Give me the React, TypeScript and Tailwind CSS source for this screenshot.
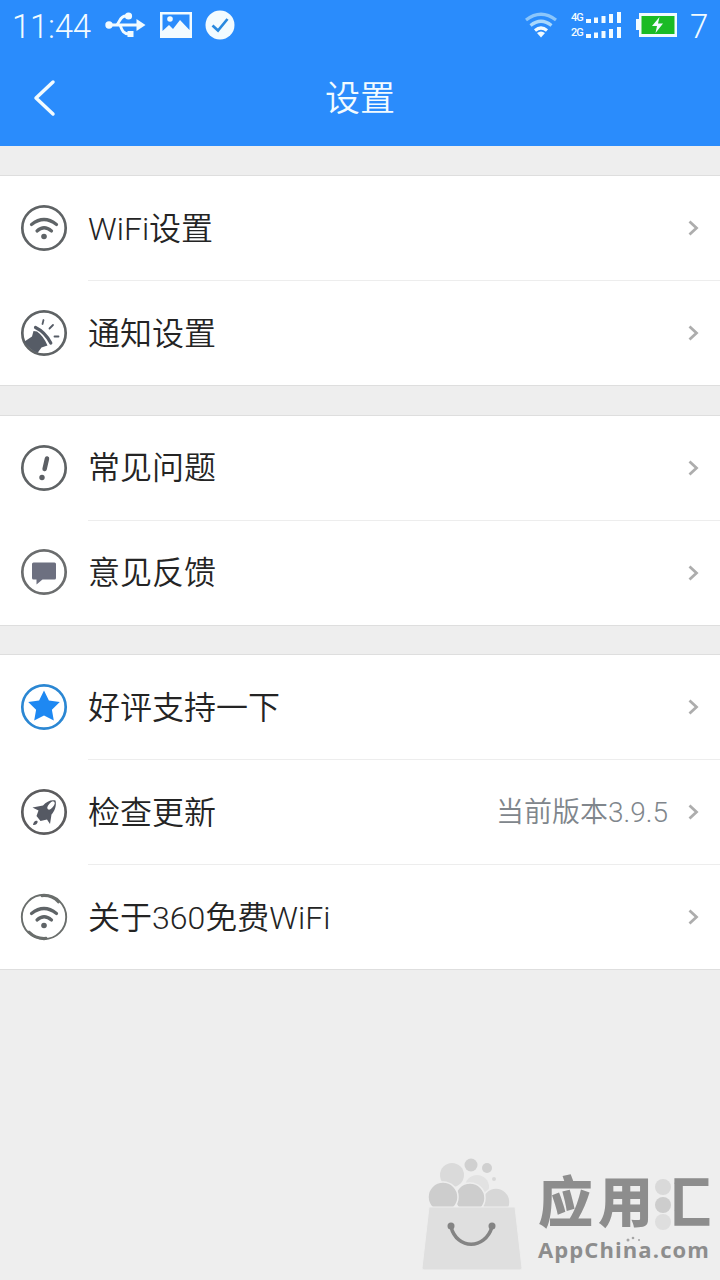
import { type ReactNode } from "react";

type Item = {
  label: string;
  icon: ReactNode;
  note?: string;
};

function Ring({ color = "#5f6365", children }: { color?: string; children: ReactNode }) {
  return (
    <svg width="48" height="48" viewBox="0 0 48 48" fill="none" className="shrink-0">
      <circle cx="24" cy="24" r="21.7" stroke={color} strokeWidth="2.7" />
      {children}
    </svg>
  );
}

function WifiArcs() {
  return (
    <>
      <path d="M11.500 20.500Q24 10.500 36.500 20.500" stroke="#5f6467" strokeWidth="3.200" strokeLinecap="round" />
      <path d="M17 27Q24 20.500 31.500 27" stroke="#5f6467" strokeWidth="3.200" strokeLinecap="round" />
      <circle cx="24" cy="32.500" r="2.800" fill="#5f6467" />
    </>
  );
}

function WifiIcon() {
  return (
    <Ring>
      <WifiArcs />
    </Ring>
  );
}

function NoticeIcon() {
  return (
    <Ring>
      <path d="M13.500 22L17 22.500Q23.500 27 27.500 36.500L21.500 38.500L17.500 44Q8.500 40 4.500 32.500L12 27.500Z" fill="#565c66" />
      <path d="M15.500 18.500Q25 23 30.800 34" stroke="#565c66" strokeWidth="3.200" strokeLinecap="round" />
      <path d="M23.500 11L22.500 15M33 16L29.500 19.500M34.500 27.500H38.500" stroke="#565c66" strokeWidth="1.800" strokeLinecap="round" />
    </Ring>
  );
}

function QuestionIcon() {
  return (
    <Ring>
      <path d="M27 14.500L24.600 25" stroke="#5c5f64" strokeWidth="4.500" strokeLinecap="round" />
      <circle cx="22" cy="33.500" r="2.700" fill="#5c5f64" />
    </Ring>
  );
}

function FeedbackIcon() {
  return (
    <Ring color="#6b6d6e">
      <path d="M13.500 14.500H34.500Q36 14.500 36 16V30Q36 31.500 34.500 31.500H22.500L16.500 36.500V31.500H13.500Q12 31.500 12 30V16Q12 14.500 13.500 14.500Z" fill="#6d7080" />
    </Ring>
  );
}

function StarIcon() {
  return (
    <Ring color="#2b87d3">
      <path d="M24 7.500L28.900 17.400L39.800 19L31.900 26.700L33.800 37.500L24 32.400L14.200 37.500L16.100 26.700L8.200 19L19.100 17.400Z" fill="#1e88f2" />
    </Ring>
  );
}

function RocketIcon() {
  return (
    <Ring color="#5c5c5e">
      <path d="M35.500 12.500C37 18 34 24 31.500 26.500L30 36L27 31.500L20.500 33L16.500 28L18.500 22.500L12.500 19.500L23 17.500C26.500 13.500 31 11.500 35.500 12.500Z" fill="#555963" />
      <ellipse cx="31" cy="17.500" rx="2.400" ry="4.800" transform="rotate(40 31 17.500)" fill="#fff" />
      <path d="M13 37C13.500 34 15 32 17.500 33C18 35.500 16 37 13 37Z" fill="#555963" />
    </Ring>
  );
}

function AboutIcon() {
  return (
    <svg width="48" height="48" viewBox="0 0 48 48" fill="none" className="shrink-0">
      <circle cx="24" cy="24" r="22.200" stroke="#6a6e6c" strokeWidth="1.900" />
      <path d="M22 2.800Q32 2 38.500 9M26 45.200Q16 46 9 39" stroke="#6a6e6c" strokeWidth="2.700" strokeLinecap="round" />
      <WifiArcs />
    </svg>
  );
}

const groups: Item[][] = [
  [
    { label: "WiFi设置", icon: <WifiIcon /> },
    { label: "通知设置", icon: <NoticeIcon /> },
  ],
  [
    { label: "常见问题", icon: <QuestionIcon /> },
    { label: "意见反馈", icon: <FeedbackIcon /> },
  ],
  [
    { label: "好评支持一下", icon: <StarIcon /> },
    { label: "检查更新", icon: <RocketIcon />, note: "当前版本3.9.5" },
    { label: "关于360免费WiFi", icon: <AboutIcon /> },
  ],
];

function SignalRow({ label }: { label: string }) {
  return (
    <div className="flex h-[15px] items-center">
      <span className="w-[15px] text-[11px] leading-none font-medium tracking-[-1px]">{label}</span>
      <svg width="36" height="11" viewBox="0 0 36 11" fill="currentColor" className="shrink-0">
        <rect x="0" y="7" width="5" height="4" />
        <rect x="8" y="5.500" width="4" height="5.500" />
        <rect x="15.500" y="4" width="4" height="7" />
        <rect x="23" y="2" width="4" height="9" />
        <rect x="31" y="0" width="4" height="11" />
      </svg>
    </div>
  );
}

function StatusBar() {
  return (
    <div className="flex h-[50px] items-center pl-3 text-[#f2fbff]">
      <span className="mt-0.5 w-[81px] text-[33px] leading-none font-light tracking-[-0.3px] whitespace-nowrap">11:44</span>

      {/* USB */}
      <svg width="41" height="28" viewBox="0 0 41 28" fill="none" stroke="currentColor" strokeWidth="2.800" className="ml-3">
        <path d="M3 14H34M11 14C15 13 14 5 21 5H24M15 14C17 19 18 23 24 23" />
        <circle cx="4" cy="14" r="3.700" fill="currentColor" stroke="none" />
        <circle cx="23.500" cy="5" r="3.600" fill="currentColor" stroke="none" />
        <path d="M31.500 8L40.500 14L31.500 20ZM22.500 20H28.500V26H22.500Z" fill="currentColor" stroke="none" />
      </svg>

      {/* Picture */}
      <svg width="34" height="28" viewBox="0 0 34 28" className="ml-[13px]">
        <path fillRule="evenodd" d="M1 1H33V27H1ZM3.500 3.500V20L10 14L14 18L21 9L30.500 19V3.500Z" fill="currentColor" />
        <circle cx="11" cy="8" r="2.800" fill="currentColor" />
      </svg>

      {/* Done */}
      <svg width="30" height="30" viewBox="0 0 30 30" fill="none" className="ml-[12px]">
        <circle cx="15" cy="15" r="14.500" fill="currentColor" />
        <path d="M7.500 15.500L13 20.500L22.500 9" stroke="#2889df" strokeWidth="2.700" />
      </svg>

      <div className="ml-auto flex items-center">
        {/* Wifi strength */}
        <svg width="32" height="26" viewBox="0 0 32 26" fill="none" strokeWidth="3.200">
          <path d="M1 8Q16 -3.500 31 8" stroke="#8bc6fb" />
          <path d="M5.500 13.500Q16 5 26.500 13.500" stroke="#a9d8fc" />
          <path d="M10 18.500Q16 13.500 22 18.500" stroke="currentColor" />
          <path d="M12 21Q16 18 20 21L16 25.500Z" fill="currentColor" />
        </svg>
        <div className="ml-[14px] flex w-[51px] flex-col">
          <SignalRow label="4G" />
          <SignalRow label="2G" />
        </div>
        <svg width="43" height="26" viewBox="0 0 43 26" className="ml-[13px]">
          <path d="M1 7H4V1H42V25H4V18H1Z" fill="currentColor" />
          <rect x="6.500" y="4" width="33" height="18" fill="#1bbb25" />
          <path d="M24.500 5L17 14H22L20.500 21L28 11.500H23Z" fill="currentColor" />
        </svg>
        <span className="mt-0.5 ml-[12px] w-[30px] text-[33px] leading-none font-light">7</span>
      </div>
    </div>
  );
}

function SettingRow({ item, divided }: { item: Item; divided: boolean }) {
  return (
    <li className="flex h-[105px] pl-5 last:h-[104px]">
      <div className="flex items-center pb-px last:pb-0">{item.icon}</div>
      <div className={`ml-5 flex flex-1 items-center pr-[21px] ${divided ? "border-b border-[#ededed]" : ""}`}>
        <span className="pt-px text-[32px] leading-none font-[350] text-[#242424]">{item.label}</span>
        {item.note && (
          <span className="ml-auto pt-0.5 text-[28px] leading-none font-[350] text-[#80868c]">{item.note}</span>
        )}
        <svg width="12" height="18" viewBox="0 0 12 18" fill="none" className={item.note ? "ml-[19px]" : "ml-auto"}>
          <path d="M2.500 2.500L9.500 9L2.500 15.500" stroke="#adadad" strokeWidth="2.800" />
        </svg>
      </div>
    </li>
  );
}

function Watermark() {
  return (
    <div className="mt-auto flex h-[124px] items-start self-end pr-2">
      <svg width="102" height="116" viewBox="0 0 102 116" fill="none">
        <circle cx="31" cy="19" r="12" fill="#dadada" />
        <circle cx="50" cy="9" r="6.500" fill="#d0d0d0" />
        <circle cx="66" cy="12" r="5" fill="#d0d0d0" />
        <circle cx="73" cy="23" r="2" fill="#d8d8d8" />
        <circle cx="56" cy="31" r="12" fill="#e2e2e2" />
        <circle cx="75" cy="46" r="14" fill="#d7d7d7" stroke="#eee" strokeWidth="1.500" />
        <circle cx="49" cy="42" r="15" fill="#cdcdcd" stroke="#eee" strokeWidth="1.500" />
        <circle cx="22" cy="41" r="15" fill="#cdcdcd" stroke="#eee" strokeWidth="1.500" />
        <path d="M8 51H94L101 112Q101 114 99 114H3Q1 114 1 112Z" fill="#dfdfdf" stroke="#eee" />
        <path d="M30 71C36 94 64 94 71 71" stroke="#848484" strokeWidth="3.500" />
        <circle cx="30" cy="70" r="3.500" fill="#848484" />
        <circle cx="71" cy="70" r="3.500" fill="#848484" />
      </svg>
      <div className="mt-[18px] ml-[15px] flex w-[174px] flex-col text-[#8d8d8d]">
        <div className="relative flex h-[63px] items-start pt-0.5 text-[55px] leading-none font-black whitespace-nowrap">
          <span className="w-[60px]">应</span>
          <span className="w-[58px]">用</span>
          <span>汇</span>
          {/* The water radical of the last character is three bubbles */}
          <svg width="20" height="60" viewBox="0 0 20 60" className="absolute top-0 left-[116px] bg-[#eee]">
            <circle cx="9" cy="13" r="8" fill="#d9d9d9" />
            <circle cx="9" cy="31" r="8" fill="#cdcdcd" />
            <circle cx="9" cy="48" r="8" fill="#dedede" />
          </svg>
        </div>
        <div className="relative font-['Open_Sans','Noto_Sans',sans-serif] text-[22px] leading-[24px] font-bold tracking-[1.1px]">
          AppChina.com
          <svg width="18" height="6" viewBox="0 0 18 6" fill="#a5a5a5" className="absolute -top-px left-[87px]">
            <circle cx="3" cy="4" r="1.500" />
            <circle cx="8" cy="2" r="1.300" />
            <circle cx="14" cy="4" r="1" />
          </svg>
        </div>
      </div>
    </div>
  );
}

export default function App() {
  return (
    <div className="flex h-[1280px] w-[720px] flex-col overflow-hidden bg-[#eee] font-[Roboto,'Noto_Sans_CJK_SC',sans-serif]">
      <header className="h-[146px] bg-[#2a8cfc]">
        <StatusBar />
        <div className="grid h-24 grid-cols-3 items-center">
          <svg width="24" height="38" viewBox="0 0 24 38" fill="none" className="ml-8">
            <path d="M21 3L4 19L21 35" stroke="#f2fbff" strokeWidth="3.500" strokeLinecap="round" strokeLinejoin="round" />
          </svg>
          <h1 className="pt-[2px] text-center text-[35px] leading-none font-[350] text-[#f2fbff]">设置</h1>
        </div>
      </header>

      <main className="flex flex-col gap-[28.5px] pt-[29px]">
        {groups.map((items) => (
          <ul key={items[0].label} className="border-y border-[#dedede] bg-white">
            {items.map((item, i) => (
              <SettingRow key={item.label} item={item} divided={i < items.length - 1} />
            ))}
          </ul>
        ))}
      </main>

      <Watermark />
    </div>
  );
}
